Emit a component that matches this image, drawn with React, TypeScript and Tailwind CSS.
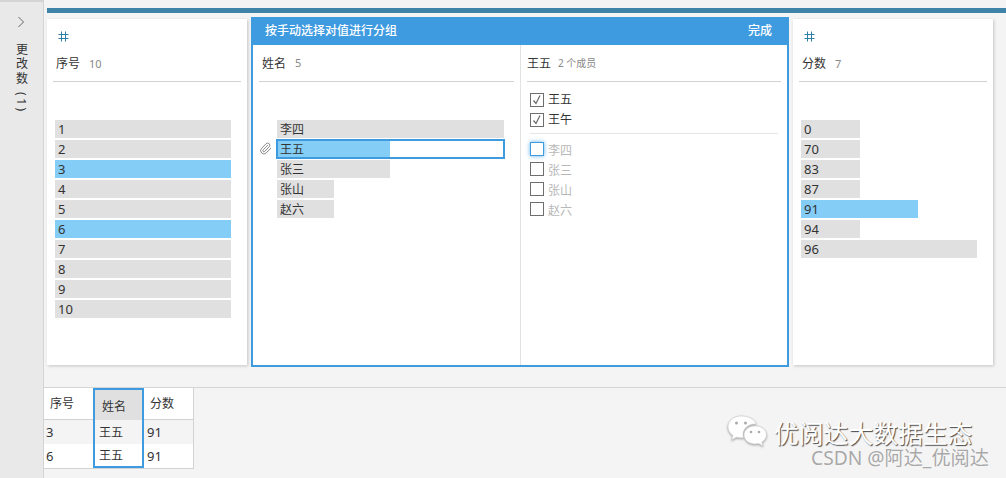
import { Paperclip } from "lucide-react";

const font = "font-['Noto_Sans','Noto_Sans_CJK_SC',sans-serif]";

const idRows = [
  { label: "1" },
  { label: "2" },
  { label: "3", on: true },
  { label: "4" },
  { label: "5" },
  { label: "6", on: true },
  { label: "7" },
  { label: "8" },
  { label: "9" },
  { label: "10" },
];

const nameRows = [
  { label: "李四", width: "w-[227px]" },
  { label: "王五", width: "w-[227px]", selected: true },
  { label: "张三", width: "w-[113px]" },
  { label: "张山", width: "w-[57px]" },
  { label: "赵六", width: "w-[57px]" },
];

const scoreRows = [
  { label: "0", width: "w-[59px]" },
  { label: "70", width: "w-[59px]" },
  { label: "83", width: "w-[59px]" },
  { label: "87", width: "w-[59px]" },
  { label: "91", width: "w-[117px]", on: true },
  { label: "94", width: "w-[59px]" },
  { label: "96", width: "w-[176px]" },
];

function HashIcon() {
  return (
    <svg width="11" height="11" viewBox="0 0 11 11" fill="none" stroke="#2f7ea3" strokeWidth="1">
      <path d="M3.5 0.5V10.5M7.5 0.5V10.5M0.5 3.5H10.5M0.5 7.5H10.5" />
    </svg>
  );
}

function Check({ on, focus, label }: { on?: boolean; focus?: boolean; label: string }) {
  return (
    <div className="flex h-5 items-center">
      <div
        className={
          focus
            ? "flex h-[14px] w-[14px] items-center justify-center border border-[#3f9bdf] bg-white shadow-[0_0_4px_#5fb0ea]"
            : "flex h-[14px] w-[14px] items-center justify-center border border-[#6e6e6e] bg-white"
        }
      >
        {on && (
          <svg width="10" height="10" viewBox="0 0 10 10" fill="none" stroke="#666" strokeWidth="1.2">
            <path d="M1.5 5.5L4 8.5L8 0.5" />
          </svg>
        )}
      </div>
      <span className={on ? "ml-1 text-xs text-[#333]" : "ml-1 mt-1 text-xs text-[#b8b8b8]"}>{label}</span>
    </div>
  );
}

function Card({ title, count, children }: { title: string; count: string; children: React.ReactNode }) {
  return (
    <div className="my-[2px] h-[346px] w-[200px] shrink-0 bg-white shadow-[1px_1px_3px_rgba(0,0,0,0.2)]">
      <div className="mx-[6px] h-[63px] border-b border-[#d2d2d2]">
        <div className="pl-[5px] pt-3">
          <HashIcon />
        </div>
        <div className="mt-[14px] flex items-center pl-[3px]">
          <span className="text-xs text-[#333]">{title}</span>
          <span className="ml-[9px] text-[11px] text-[#888]">{count}</span>
        </div>
      </div>
      {children}
    </div>
  );
}

function Bar({ label, on, width, cjk }: { label: string; on?: boolean; width: string; cjk?: boolean }) {
  return (
    <div
      className={
        (on ? "bg-[#84cdf6] " : "bg-[#e0e0e0] ") +
        width +
        (cjk ? " pt-px text-xs" : " text-[13px]") +
        " flex h-[18px] items-center pl-[3px] leading-none text-[#333]"
      }
    >
      {label}
    </div>
  );
}

function GroupPanel() {
  return (
    <div className="h-[350px] w-[538px] shrink-0 border-x-2 border-b-2 border-[#3f9bdf] bg-white">
      <div className="-mx-[2px] flex h-[28px] items-center justify-between bg-[#3f9bdf] pl-[14px] pr-[17px] text-xs font-medium text-white">
        <span>按手动选择对值进行分组</span>
        <span>完成</span>
      </div>
      <div className="flex h-[320px]">
        <div className="relative w-[268px] shrink-0 border-r border-[#e2e2e2]">
          <div className="ml-[6px] mr-[6px] flex h-[37px] items-center border-b border-[#d2d2d2] pl-[3px] pt-px">
            <span className="text-xs text-[#333]">姓名</span>
            <span className="ml-[9px] text-[11px] text-[#888]">5</span>
          </div>
          <div className="flex flex-col gap-[2px] pl-[24px] pt-[38px]">
            {nameRows.map((row) =>
              row.selected ? (
                <div key={row.label} className="h-[18px] w-[227px] bg-white outline-2 -outline-offset-1 outline-[#3f9bdf]">
                  <Bar label={row.label} on cjk width="w-[113px]" />
                </div>
              ) : (
                <Bar key={row.label} label={row.label} cjk width={row.width} />
              )
            )}
          </div>
          <Paperclip className="absolute left-[6px] top-[97px] text-[#666]" size={13} strokeWidth={1.4} />
        </div>
        <div className="flex-1">
          <div className="mx-[6px] flex h-[37px] items-center border-b border-[#d2d2d2] pt-px">
            <span className="text-xs text-[#333]">王五</span>
            <span className="ml-[7px] text-[10px] text-[#888]">2 个成员</span>
          </div>
          <div className="pl-[9px] pr-[9px] pt-[8px]">
            <Check on label="王五" />
            <Check on label="王午" />
            <div className="mb-[5px] mt-[3px] border-t border-[#e6e6e6]" />
            <Check focus label="李四" />
            <Check label="张三" />
            <Check label="张山" />
            <Check label="赵六" />
          </div>
        </div>
      </div>
    </div>
  );
}

function ResultTable() {
  return (
    <div className="flex h-[81px] w-[150px] border-b border-r border-[#d2d2d2] bg-white text-xs text-[#333]">
      <div className="w-[50px] border-r border-[#d2d2d2]">
        <div className="flex h-[32px] items-center border-b border-[#d2d2d2] pl-[6px]">序号</div>
        <div className="flex h-[24px] items-center bg-[#f4f4f4] pl-[2px] pt-px text-[13px]">3</div>
        <div className="flex h-[24px] items-center pl-[2px] pt-px text-[13px]">6</div>
      </div>
      <div className="-ml-px w-[51px] border-2 border-[#3f9bdf]">
        <div className="flex h-[30px] items-center bg-[#e0e0e0] pl-[7px] pt-[3px]">姓名</div>
        <div className="flex h-[24px] items-center bg-[#f4f4f4] pl-1 pt-px">王五</div>
        <div className="flex h-[23px] items-center pl-1 pt-px">王五</div>
      </div>
      <div className="flex-1">
        <div className="flex h-[32px] items-center border-b border-[#d2d2d2] pl-[6px]">分数</div>
        <div className="flex h-[24px] items-center bg-[#f4f4f4] pl-[3px] pt-px text-[13px]">91</div>
        <div className="flex h-[24px] items-center pl-[3px] pt-px text-[13px]">91</div>
      </div>
    </div>
  );
}

function Watermark() {
  return (
    <div className="absolute left-[727px] top-[415px] w-[279px]">
      <div className="flex items-center">
        <svg width="41" height="36" viewBox="0 0 41 36" className="drop-shadow-[0_1px_1px_rgba(0,0,0,0.35)]">
          <path d="M14 1C6.5 1 1 6 1 12c0 3.6 2 6.500 5 8.500L4.500 25l5-2.800c1.500.4 3 .6 4.500.6 1 0 1.600 0 2.500-.2-.4-1.200-.5-2.200-.5-3.300C16 13.500 21.500 9 28 9c.6 0 .9 0 1.300.1C27.800 4.300 21.500 1 14 1z" fill="#fff" stroke="#ccc" strokeWidth="0.6" />
          <path d="M28 11c-6 0-11 4-11 9s5 9 11 9c1.300 0 2.500-.2 3.600-.5l4.400 2.500-1.200-3.800c2.800-1.700 4.700-4.300 4.700-7.200 0-5-5-9-10.500-9z" fill="#fff" stroke="#ccc" strokeWidth="0.6" />
          <circle cx="9.500" cy="8" r="1.500" fill="#aaa" />
          <circle cx="18.500" cy="8" r="1.500" fill="#aaa" />
          <circle cx="24" cy="17" r="1.300" fill="#aaa" />
          <circle cx="32" cy="17" r="1.300" fill="#aaa" />
        </svg>
        <span className="ml-[6px] whitespace-nowrap text-[24.800px] leading-none text-white [text-shadow:1px_1px_1px_rgba(0,0,0,0.7)]">
          优阅达大数据生态
        </span>
      </div>
      <div className="ml-[84px] -mt-[3px] whitespace-nowrap text-[19.200px] leading-[20px] text-[#a8a8a8] [text-shadow:0_0_1px_#fff]">
        CSDN @阿达_优阅达
      </div>
    </div>
  );
}

export default function App() {
  return (
    <div className={font + " relative flex h-[478px] w-[1006px] overflow-hidden bg-[#f4f4f4]"}>
      {/* Changes rail */}
      <div className="flex w-[44px] shrink-0 flex-col items-center border-r border-t-2 border-[#d4d4d4] bg-[#e9e9e9] pr-px pt-[14px]">
        <svg width="8" height="12" viewBox="0 0 8 12" fill="none" stroke="#666" strokeWidth="1">
          <path d="M1.500 1L6.500 6L1.500 11" />
        </svg>
        <div className="mt-[15px] text-xs leading-[15px] tracking-[2.500px] text-[#333] [writing-mode:vertical-rl]">更改数 (1)</div>
      </div>

      <div className="flex min-w-0 flex-1 flex-col">
        <div className="h-[387px] pl-[3px] pt-2">
          <div className="h-[5px] bg-[#3f83a8]" />
          <div className="mt-1 flex gap-1">
            <Card title="序号" count="10">
              <div className="flex flex-col gap-[2px] pl-2 pt-[38px]">
                {idRows.map((row) => (
                  <Bar key={row.label} label={row.label} on={row.on} width="w-[176px]" />
                ))}
              </div>
            </Card>
            <GroupPanel />
            <Card title="分数" count="7">
              <div className="flex flex-col gap-[2px] pl-2 pt-[38px]">
                {scoreRows.map((row) => (
                  <Bar key={row.label} label={row.label} on={row.on} width={row.width} />
                ))}
              </div>
            </Card>
          </div>
        </div>
        <div className="flex-1 border-t border-[#d4d4d4]">
          <ResultTable />
        </div>
      </div>
      <Watermark />
    </div>
  );
}
